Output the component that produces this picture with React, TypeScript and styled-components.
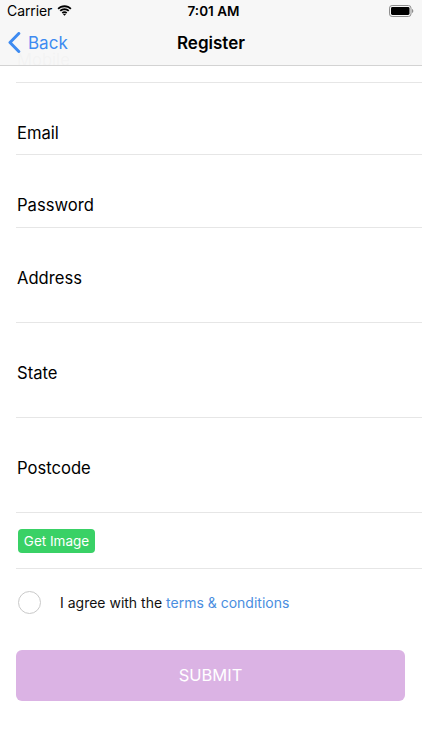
import React from "react";
import styled, { createGlobalStyle } from "styled-components";

const Global = createGlobalStyle`
  html, body { margin: 0; padding: 0; background: #fff; }
  body { font-family: Inter, "Noto Sans", Roboto, sans-serif; -webkit-font-smoothing: antialiased; }
  * { box-sizing: border-box; }
`;

const Screen = styled.div`
  position: relative;
  width: 422px;
  height: 750px;
  overflow: hidden;
  background: #fff;
`;

const Header = styled.header`
  position: absolute;
  top: 0;
  left: 0;
  right: 0;
  z-index: 2;
  background: rgba(247, 247, 247, 0.985);
  border-bottom: 1px solid #d3d3d3;
`;

const StatusBar = styled.div`
  height: 21px;
  display: grid;
  grid-template-columns: 1fr auto 1fr;
  align-items: center;
  padding: 0 8px 0 7px;
  font-size: 14px;
  color: #000;
`;

const StatusLeft = styled.div`
  display: flex;
  align-items: center;
  gap: 5px;
  letter-spacing: -0.1px;
`;

const StatusTime = styled.div`
  font-weight: 600;
  font-size: 13.5px;
  margin-left: 6px;
`;

const StatusRight = styled.div`
  display: flex;
  justify-content: flex-end;
  align-items: center;
`;

const NavBar = styled.div`
  height: 44px;
  display: grid;
  grid-template-columns: 1fr auto 1fr;
  align-items: center;
  padding: 0 8px;
`;

const BackButton = styled.div`
  display: flex;
  align-items: center;
  gap: 7px;
  color: #3e8bf1;
  font-size: 17px;
  margin-top: -1px;
`;

const Title = styled.div`
  font-size: 17px;
  font-weight: 600;
  color: #000;
  margin-top: -1px;
`;

const Content = styled.main`
  padding-top: 10px;
  display: flex;
  flex-direction: column;
`;

const FieldRow = styled.div<{ $tall?: boolean }>`
  height: ${(p) => (p.$tall ? 95 : 72.5)}px;
  margin-left: 16px;
  border-bottom: 1px solid #e6e6e6;
  padding-top: 40px;
`;

const Label = styled.div`
  font-size: 16.6px;
  line-height: 20px;
  color: #000;
  padding-left: 1px;
`;

const ButtonRow = styled.div`
  height: 56px;
  margin-left: 16px;
  border-bottom: 1px solid #e6e6e6;
  display: flex;
  align-items: center;
  padding-left: 2px;
  padding-top: 1px;
`;

const GreenButton = styled.div`
  height: 24px;
  width: 77px;
  background: #39d166;
  border-radius: 4px;
  color: #fff;
  font-size: 13.5px;
  display: flex;
  align-items: center;
  justify-content: center;
`;

const AgreeRow = styled.div`
  height: 68px;
  display: flex;
  align-items: center;
  padding-left: 18px;
  gap: 19px;
`;

const Circle = styled.div`
  width: 23px;
  height: 23px;
  border-radius: 50%;
  border: 1px solid #c9c9c9;
`;

const AgreeText = styled.div`
  font-size: 14px;
  color: #111;
`;

const Link = styled.span`
  color: #4a8ee0;
`;

const SubmitButton = styled.div`
  margin: 13px 17px 0 16px;
  height: 51px;
  border-radius: 6px;
  background: #dbb3e4;
  color: #fff;
  font-size: 16.5px;
  display: flex;
  align-items: center;
  justify-content: center;
`;

const Wifi = () => (
  <svg width="15" height="11" viewBox="0 0 15 11">
    <path d="M7.5 2.2c2.2 0 4.2.9 5.7 2.3l1.3-1.3C12.7 1.4 10.2.3 7.5.3S2.3 1.4.5 3.2l1.3 1.3c1.5-1.4 3.5-2.3 5.7-2.3z" fill="#000" />
    <path d="M7.5 5.2c1.4 0 2.6.5 3.6 1.4l1.3-1.3C11.1 4 9.4 3.3 7.5 3.3S3.9 4 2.6 5.3l1.3 1.3c1-.9 2.2-1.4 3.6-1.4z" fill="#000" />
    <path d="M7.5 8.1c.6 0 1.1.2 1.5.6L10.3 7.4C9.6 6.7 8.6 6.3 7.5 6.3S5.4 6.7 4.7 7.4L6 8.7c.4-.4.9-.6 1.5-.6z" fill="#000" />
    <path d="M7.5 10.8 9 9.3c-.4-.4-.9-.6-1.5-.6s-1.1.2-1.5.6z" fill="#000" />
  </svg>
);

const Battery = () => (
  <svg width="25" height="12" viewBox="0 0 25 12">
    <rect x="0.5" y="0.5" width="21.5" height="11" rx="2.6" fill="none" stroke="#8e8e8e" />
    <rect x="2" y="2" width="18.5" height="8" rx="1.4" fill="#000" />
    <path d="M23 4v4c.8-.3 1.3-1.1 1.3-2S23.8 4.3 23 4z" fill="#8e8e8e" />
  </svg>
);

const Chevron = () => (
  <svg width="13" height="21" viewBox="0 0 13 21">
    <path d="M10.8 1.5 2 10.5l8.8 9" fill="none" stroke="#3e8bf1" strokeWidth="3" strokeLinecap="round" strokeLinejoin="round" />
  </svg>
);

const fields: { label: string; tall?: boolean }[] = [
  { label: "Mobile" },
  { label: "Email" },
  { label: "Password" },
  { label: "Address", tall: true },
  { label: "State", tall: true },
  { label: "Postcode", tall: true },
];

export default function App() {
  return (
    <Screen>
      <Global />
      <Header>
        <StatusBar>
          <StatusLeft>
            <span>Carrier</span>
            <Wifi />
          </StatusLeft>
          <StatusTime>7:01 AM</StatusTime>
          <StatusRight>
            <Battery />
          </StatusRight>
        </StatusBar>
        <NavBar>
          <BackButton>
            <Chevron />
            <span>Back</span>
          </BackButton>
          <Title>Register</Title>
          <div />
        </NavBar>
      </Header>
      <Content>
        {fields.map((f) => (
          <FieldRow key={f.label} $tall={f.tall}>
            <Label>{f.label}</Label>
          </FieldRow>
        ))}
        <ButtonRow>
          <GreenButton>Get Image</GreenButton>
        </ButtonRow>
        <AgreeRow>
          <Circle />
          <AgreeText>
            I agree with the <Link>terms &amp; conditions</Link>
          </AgreeText>
        </AgreeRow>
        <SubmitButton>SUBMIT</SubmitButton>
      </Content>
    </Screen>
  );
}
